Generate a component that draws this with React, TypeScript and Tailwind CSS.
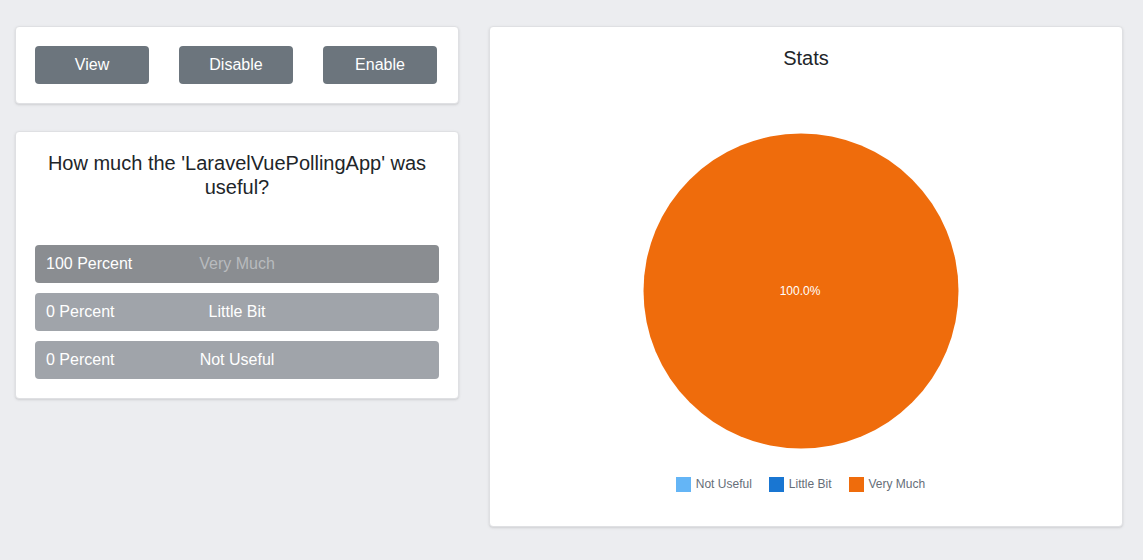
const legend = [
  { label: "Not Useful", color: "bg-[#64b5f6]" },
  { label: "Little Bit", color: "bg-[#1976d2]" },
  { label: "Very Much", color: "bg-[#ef6c0c]" },
];

const results = [
  { percent: 100, label: "Very Much", top: true },
  { percent: 0, label: "Little Bit", top: false },
  { percent: 0, label: "Not Useful", top: false },
];

export default function App() {
  return (
    <div className="min-h-[560px] bg-[#ecedf0] pt-[26px] pl-[15px] font-['Liberation_Sans',Arial,sans-serif] text-[#212529]">
      <div className="flex gap-[30px] items-start">
        {/* left column */}
        <div className="flex w-[444px] flex-col gap-[27px]">
          <div className="rounded border border-[#dfe0e3] bg-white px-[19px] py-[19px] shadow-sm">
            <div className="flex gap-[30px]">
              {["View", "Disable", "Enable"].map((b) => (
                <button
                  key={b}
                  className="h-[38px] w-[114px] rounded bg-[#6c757d] text-base text-white"
                >
                  {b}
                </button>
              ))}
            </div>
          </div>

          <div className="rounded border border-[#dfe0e3] bg-white px-[19px] pt-[19px] pb-[19px] shadow-sm">
            <h3 className="px-2 text-center text-[20px] leading-[24px]">
              How much the 'LaravelVuePollingApp' was useful?
            </h3>
            <div className="mt-[46px] flex flex-col gap-[10px]">
              {results.map((r) => (
                <div
                  key={r.label}
                  className={
                    "relative flex h-[38px] items-center rounded px-[11px] text-base " +
                    (r.top ? "bg-[#8a8d91]" : "bg-[#a0a4aa]")
                  }
                >
                  <span className="text-white">{r.percent} Percent</span>
                  <span
                    className={
                      "absolute inset-0 flex items-center justify-center " +
                      (r.top ? "text-[#b8bbbe]" : "text-white")
                    }
                  >
                    {r.label}
                  </span>
                </div>
              ))}
            </div>
          </div>
        </div>

        {/* stats */}
        <div className="flex h-[501px] w-[634px] flex-col items-center rounded border border-[#dfe0e3] bg-white shadow-sm">
          <h3 className="mt-[19px] text-[20px] leading-[24px]">Stats</h3>
          <svg width="320" height="320" viewBox="0 0 320 320" className="mt-[61px] ml-[-10px]">
            <circle cx="160" cy="160" r="157.5" fill="#ef6c0c" />
            <text
              x="159"
              y="164"
              textAnchor="middle"
              fontSize="12"
              fill="#ffffff"
              fontFamily="Liberation Sans, Arial, sans-serif"
            >
              100.0%
            </text>
          </svg>
          <div className="mt-[24px] ml-[-11px] flex items-center gap-[17px] text-[12px] text-[#666e78]">
            {legend.map((l) => (
              <div key={l.label} className="flex items-center gap-[5px]">
                <span className={"inline-block h-[15px] w-[15px] " + l.color} />
                <span>{l.label}</span>
              </div>
            ))}
          </div>
        </div>
      </div>
    </div>
  );
}
